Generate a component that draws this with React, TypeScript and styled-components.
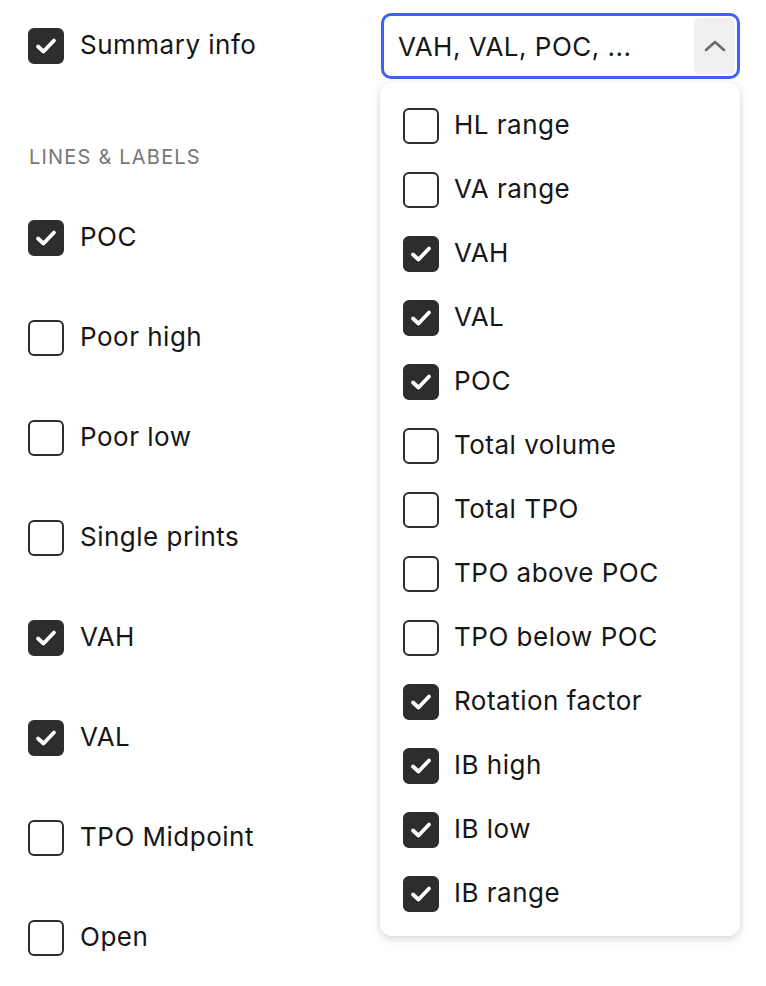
import React from "react";
import styled, { createGlobalStyle } from "styled-components";

const Global = createGlobalStyle`
  html, body { margin: 0; padding: 0; background: #fff; }
  body { font-family: Inter, "Noto Sans", "Liberation Sans", sans-serif; color: #161616; }
`;

const Page = styled.div`
  width: 766px;
  height: 986px;
  box-sizing: border-box;
  padding: 13px 28px 0 28px;
  overflow: hidden;
`;

const TopRow = styled.div`
  display: flex;
  justify-content: space-between;
  align-items: flex-start;
`;

const Row = styled.label<{ $h: number; $gap: number }>`
  display: flex;
  align-items: center;
  gap: ${(p) => p.$gap}px;
  height: ${(p) => p.$h}px;
  font-size: 26px;
  letter-spacing: 0.5px;
  color: #161616;
`;

const RowText = styled.span`
  line-height: 30px;
  padding-bottom: 2px;
`;

const Box = styled.span<{ $on: boolean }>`
  flex: none;
  width: 36px;
  height: 36px;
  box-sizing: border-box;
  border-radius: 6px;
  border: 2px solid #2d2d2d;
  background: ${(p) => (p.$on ? "#2d2d2d" : "#fff")};
  display: flex;
  align-items: center;
  justify-content: center;
`;

const SectionLabel = styled.div`
  margin-top: 65px;
  margin-left: 1px;
  font-size: 20px;
  letter-spacing: 1.2px;
  color: #777;
  height: 26px;
  line-height: 26px;
`;

const List = styled.div`
  margin-top: 18px;
  display: flex;
  flex-direction: column;
`;

const SelectWrap = styled.div`
  position: relative;
  margin-right: -2px;
`;

const Select = styled.div`
  width: 359px;
  height: 66px;
  box-sizing: border-box;
  border: 3px solid #3d63f0;
  border-radius: 10px;
  display: flex;
  align-items: center;
  justify-content: space-between;
  padding: 0 2px 0 14px;
  font-size: 26px;
  letter-spacing: 0.5px;
  color: #161616;
`;

const ChevronBtn = styled.div`
  width: 41px;
  height: 56px;
  border-radius: 6px;
  background: #f0f0f0;
  display: flex;
  align-items: center;
  justify-content: center;
`;

const Menu = styled.div`
  position: absolute;
  top: 69px;
  left: -1px;
  width: 360px;
  box-sizing: border-box;
  background: #fff;
  border-radius: 12px;
  box-shadow: 0 3px 10px rgba(0, 0, 0, 0.16), 0 0 2px rgba(0, 0, 0, 0.06);
  padding: 12px 0 10px 23px;
  display: flex;
  flex-direction: column;
`;

const Check = () => (
  <svg width="24" height="24" viewBox="0 0 24 24" fill="none">
    <path d="M4 12.5 L9.5 17.5 L20 6.5" stroke="#fff" strokeWidth="3.8" strokeLinecap="round" strokeLinejoin="round" />
  </svg>
);

const Item = ({ on, text, h, gap = 16 }: { on: boolean; text: string; h: number; gap?: number }) => (
  <Row $h={h} $gap={gap}>
    <Box $on={on}>{on && <Check />}</Box>
    <RowText>{text}</RowText>
  </Row>
);

const left: [string, boolean][] = [
  ["POC", true],
  ["Poor high", false],
  ["Poor low", false],
  ["Single prints", false],
  ["VAH", true],
  ["VAL", true],
  ["TPO Midpoint", false],
  ["Open", false],
];

const menu: [string, boolean][] = [
  ["HL range", false],
  ["VA range", false],
  ["VAH", true],
  ["VAL", true],
  ["POC", true],
  ["Total volume", false],
  ["Total TPO", false],
  ["TPO above POC", false],
  ["TPO below POC", false],
  ["Rotation factor", true],
  ["IB high", true],
  ["IB low", true],
  ["IB range", true],
];

export default function App() {
  return (
    <Page>
      <Global />
      <TopRow>
        <Item on text="Summary info" h={66} />
        <SelectWrap>
          <Select>
            <span>VAH, VAL, POC, ...</span>
            <ChevronBtn>
              <svg width="22" height="14" viewBox="0 0 22 14" fill="none">
                <path d="M2 11 L11 3 L20 11" stroke="#6b6b6b" strokeWidth="2.6" strokeLinecap="round" strokeLinejoin="round" />
              </svg>
            </ChevronBtn>
          </Select>
          <Menu>
            {menu.map(([t, on]) => (
              <Item key={t} on={on} text={t} h={64} gap={15} />
            ))}
          </Menu>
        </SelectWrap>
      </TopRow>
      <SectionLabel>LINES &amp; LABELS</SectionLabel>
      <List>
        {left.map(([t, on]) => (
          <Item key={t} on={on} text={t} h={100} />
        ))}
      </List>
    </Page>
  );
}
